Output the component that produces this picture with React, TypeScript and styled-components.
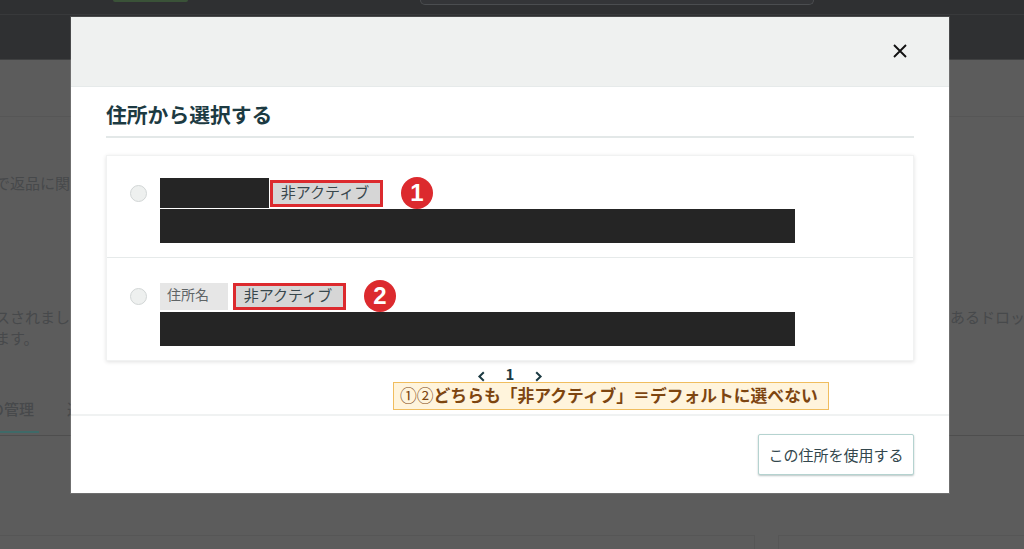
import React from "react";
import styled, { createGlobalStyle } from "styled-components";

const FONT = `"Noto Sans CJK JP", "Noto Sans", "Liberation Sans", sans-serif`;

const GlobalStyle = createGlobalStyle`
  html, body {
    margin: 0;
    padding: 0;
    background: #5c5c5c;
    overflow: hidden;
  }
  * {
    box-sizing: border-box;
  }
`;

const Page = styled.div`
  position: relative;
  width: 1024px;
  height: 549px;
  overflow: hidden;
  background: #5c5c5c;
  font-family: ${FONT};
`;

/* page behind the modal */
const TopBar = styled.header`
  height: 60px;
  background: #2f3032;
  border-bottom: 1px solid #3f4041;
`;

const TopStrip = styled.div`
  height: 15px;
  border-bottom: 1px solid #38393b;
  display: flex;
  align-items: flex-start;
`;

const GreenChip = styled.div`
  width: 75px;
  height: 2px;
  margin-left: 113px;
  border-radius: 0 0 2px 2px;
  background: #3a5238;
`;

const SearchBox = styled.div`
  width: 394px;
  height: 5px;
  margin-left: 232px;
  border: 1px solid #4b4d50;
  border-top: none;
  border-radius: 0 0 6px 6px;
  background: #343538;
`;

const BackContent = styled.div`
  padding-top: 56px;
  color: #47494b;
  font-size: 15px;
`;

const BackRule = styled.div`
  height: 1px;
  background: #565656;
`;

const BackLine = styled.div<{ $top: number }>`
  margin-top: ${(p) => p.$top}px;
  height: 21px;
  line-height: 21px;
  white-space: nowrap;
  display: flex;
  justify-content: space-between;
`;

const BackLeft = styled.span`
  margin-left: -5px;
`;

const BackRight = styled.span`
  margin-right: -1px;
`;

const TabRow = styled.div`
  margin-top: 50px;
  padding-bottom: 2px;
  border-bottom: 1px solid #4e4e4e;
  display: flex;
  font-weight: 500;
  line-height: 22px;
`;

const ActiveTab = styled.div`
  width: 39px;
  height: 35px;
  border-bottom: 2px solid #3f6a68;
  white-space: nowrap;
  text-indent: -11px;
`;

const Tab = styled.div`
  margin-left: 28px;
`;

const BottomCards = styled.div`
  position: absolute;
  left: 0;
  right: 0;
  bottom: 0;
  height: 14px;
  display: flex;
  gap: 23px;
`;

const BottomCard = styled.div<{ $w?: number }>`
  flex: ${(p) => (p.$w ? `0 0 ${p.$w}px` : "1")};
  border-top: 1px solid #565656;
  border-left: ${(p) => (p.$w ? "none" : "1px solid #565656")};
  border-right: ${(p) => (p.$w ? "1px solid #565656" : "none")};
`;

const Modal = styled.section`
  position: absolute;
  left: 71px;
  top: 17px;
  width: 878px;
  height: 476px;
  background: #ffffff;
  box-shadow: 0 0 0 1px rgba(255, 255, 255, 0.12);
  display: flex;
  flex-direction: column;
`;

const ModalHead = styled.div`
  height: 70px;
  flex: none;
  background: #eff1f0;
  border-bottom: 1px solid #e6eaea;
  display: flex;
  justify-content: flex-end;
  align-items: center;
  padding-right: 42px;
`;

const CloseIcon = styled.svg`
  width: 14px;
  height: 14px;
  display: block;
  margin-bottom: 2px;
`;

const ModalBody = styled.div`
  flex: 1;
  padding: 0 35px;
  position: relative;
`;

const Title = styled.h2`
  margin: 0;
  height: 51px;
  padding-top: 11px;
  border-bottom: 2px solid #e3e8e8;
  font-size: 20.8px;
  font-weight: 700;
  line-height: 32px;
  color: #1c3a42;
`;

const AddressList = styled.div`
  margin-top: 17px;
  background: #fff;
  border: 1px solid #f1f2f2;
  box-shadow: 0 1px 4px rgba(0, 0, 0, 0.12);
`;

const AddressRow = styled.div`
  height: 101px;
  display: flex;
  padding-left: 23px;
  & + & {
    height: 103px;
    padding-top: 1px;
    border-top: 1px solid #e6eaea;
  }
`;

const Radio = styled.span`
  flex: none;
  width: 17px;
  height: 17px;
  margin-top: 29px;
  border-radius: 50%;
  background: #eef0ef;
  border: 1px solid #d2d6d6;
`;

const RowMain = styled.div`
  margin-left: 13px;
  padding-top: 22px;
  display: flex;
  flex-direction: column;
  gap: 1px;
`;

const NameLine = styled.div`
  height: 30px;
  display: flex;
  align-items: center;
`;

const RedactName = styled.div`
  width: 109px;
  height: 30px;
  background: #252525;
`;

const NameTag = styled.span`
  width: 68px;
  height: 27px;
  padding-left: 7px;
  background: #e6e6e6;
  color: #5f6466;
  font-size: 14px;
  line-height: 23px;
`;

const StatusTag = styled.span<{ $gap: number }>`
  margin-left: ${(p) => p.$gap}px;
  width: 113px;
  height: 27px;
  padding-right: 3px;
  background: #d6d6d6;
  border: 3px solid #dc2a2e;
  color: #38474c;
  font-size: 15px;
  line-height: 18px;
  text-align: center;
`;

const Badge = styled.span<{ $gap: number }>`
  margin-left: ${(p) => p.$gap}px;
  width: 32px;
  height: 32px;
  border-radius: 50%;
  background: #dc2a2e;
  color: #fff;
  font-family: "Liberation Sans", sans-serif;
  font-size: 24px;
  font-weight: 700;
  line-height: 32px;
  text-align: center;
`;

const RedactAddress = styled.div`
  width: 635px;
  height: 34px;
  background: #252525;
`;

const Pager = styled.div`
  margin-top: 3px;
  height: 20px;
  display: flex;
  justify-content: center;
  align-items: center;
  gap: 19px;
  color: #1c3a42;
`;

const PagerArrow = styled.svg`
  width: 9px;
  height: 11px;
  display: block;
  margin-top: 4px;
`;

const PageNumber = styled.span`
  font-size: 15px;
  font-weight: 700;
  line-height: 20px;
  width: 10px;
  text-align: center;
  margin-top: -1px;
`;

const Note = styled.div`
  position: absolute;
  left: 322px;
  top: 295px;
  width: 436px;
  height: 28px;
  padding-left: 6px;
  background: #fff4dc;
  border: 1px solid #f0bd5e;
  color: #7d4510;
  font-size: 16.8px;
  font-weight: 700;
  line-height: 25px;
  white-space: nowrap;
`;

const NoteMark = styled.span`
  font-weight: 400;
`;

const ModalFoot = styled.div`
  height: 79px;
  flex: none;
  border-top: 2px solid #f0f2f2;
  display: flex;
  justify-content: flex-end;
  padding: 18px 35px 0 0;
`;

const UseButton = styled.button`
  width: 156px;
  height: 41px;
  background: #fff;
  border: 1px solid #b5d3d0;
  border-radius: 2px;
  box-shadow: 0 1px 2px rgba(60, 90, 90, 0.35);
  color: #33474d;
  font-family: ${FONT};
  font-size: 15px;
  padding: 0;
`;

function Chevron({ dir }: { dir: "left" | "right" }) {
  return (
    <PagerArrow viewBox="0 0 9 11" fill="none">
      <path
        d={dir === "left" ? "M6.8 1.2 2.4 5.5l4.4 4.3" : "M2.2 1.2 6.6 5.5l-4.4 4.3"}
        stroke="currentColor"
        strokeWidth="2"
      />
    </PagerArrow>
  );
}

export default function App() {
  return (
    <Page>
      <GlobalStyle />
      <TopBar>
        <TopStrip>
          <GreenChip />
          <SearchBox />
        </TopStrip>
      </TopBar>
      <BackContent>
        <BackRule />
        <BackLine $top={55}>
          <BackLeft>で返品に関</BackLeft>
        </BackLine>
        <BackLine $top={113}>
          <BackLeft>スされまし</BackLeft>
          <BackRight>あるドロッ</BackRight>
        </BackLine>
        <BackLine $top={0}>
          <BackLeft>ます。</BackLeft>
        </BackLine>
        <TabRow>
          <ActiveTab>の管理</ActiveTab>
          <Tab>返</Tab>
        </TabRow>
      </BackContent>
      <BottomCards>
        <BottomCard $w={755} />
        <BottomCard />
      </BottomCards>

      <Modal>
        <ModalHead>
          <CloseIcon viewBox="0 0 14 14" fill="none">
            <path d="M1 1l12 12M13 1 1 13" stroke="#111" strokeWidth="1.9" />
          </CloseIcon>
        </ModalHead>
        <ModalBody>
          <Title>住所から選択する</Title>
          <AddressList>
            <AddressRow>
              <Radio />
              <RowMain>
                <NameLine>
                  <RedactName />
                  <StatusTag $gap={1}>非アクティブ</StatusTag>
                  <Badge $gap={18}>1</Badge>
                </NameLine>
                <RedactAddress />
              </RowMain>
            </AddressRow>
            <AddressRow>
              <Radio />
              <RowMain>
                <NameLine>
                  <NameTag>住所名</NameTag>
                  <StatusTag $gap={5}>非アクティブ</StatusTag>
                  <Badge $gap={18}>2</Badge>
                </NameLine>
                <RedactAddress />
              </RowMain>
            </AddressRow>
          </AddressList>
          <Pager>
            <Chevron dir="left" />
            <PageNumber>1</PageNumber>
            <Chevron dir="right" />
          </Pager>
          <Note>
            <NoteMark>①②</NoteMark>どちらも「非アクティブ」＝デフォルトに選べない
          </Note>
        </ModalBody>
        <ModalFoot>
          <UseButton>この住所を使用する</UseButton>
        </ModalFoot>
      </Modal>
    </Page>
  );
}
